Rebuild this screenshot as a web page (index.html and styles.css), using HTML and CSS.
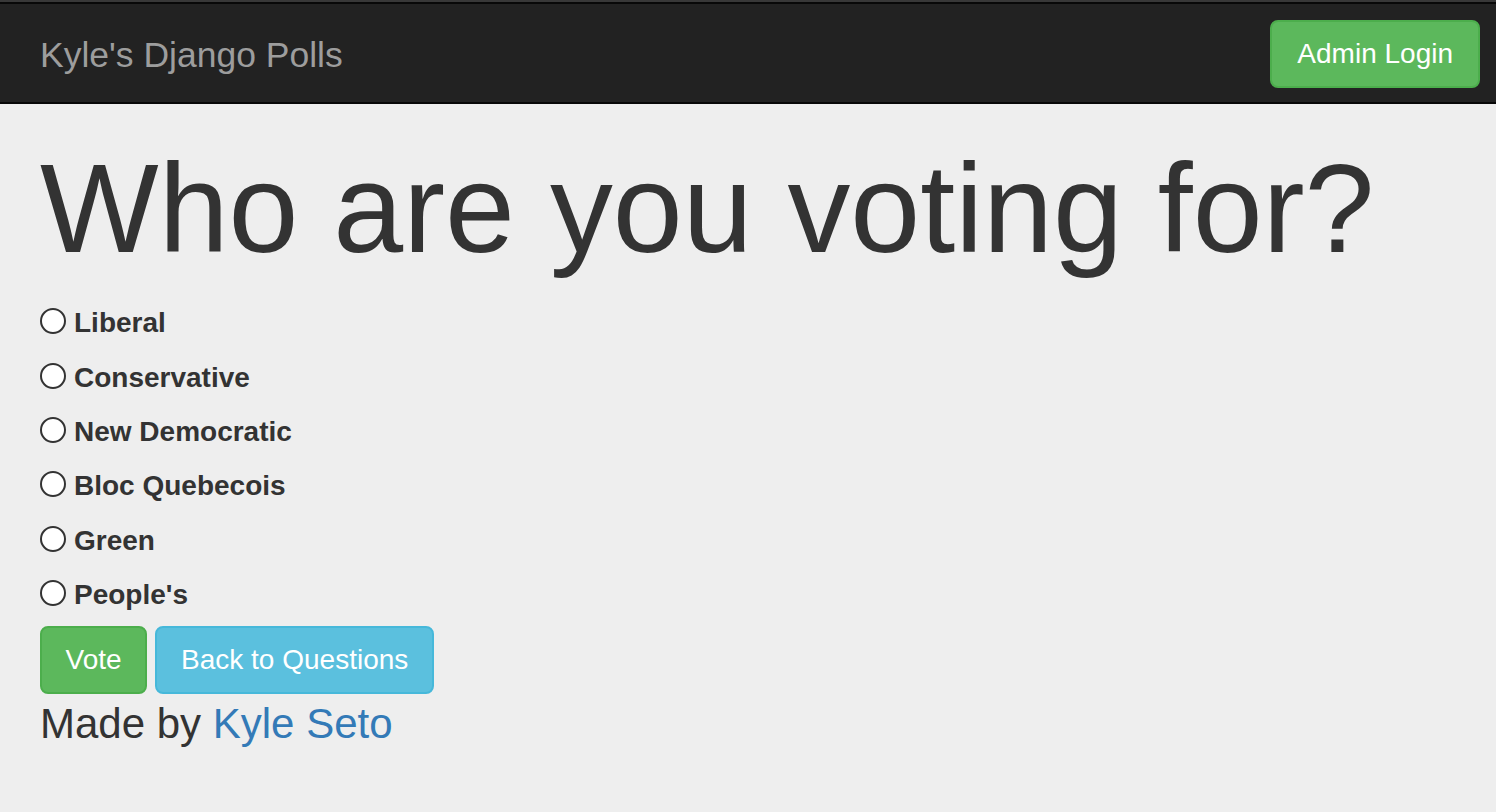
FILE: index.html
```html
<!DOCTYPE html>
<html lang="en">
<head>
<meta charset="utf-8">
<title>Kyle's Django Polls</title>
<link rel="stylesheet" href="styles.css">
</head>
<body>
<div class="page">
  <nav class="navbar">
    <a class="brand" href="#">Kyle's Django Polls</a>
    <a class="btn btn-success navbar-btn" href="#">Admin Login</a>
  </nav>
  <main class="jumbotron">
    <h1 class="title">Who are you voting for?</h1>
    <form class="poll">
      <label class="choice"><input type="radio" name="choice" class="radio"><span>Liberal</span></label>
      <label class="choice"><input type="radio" name="choice" class="radio"><span>Conservative</span></label>
      <label class="choice"><input type="radio" name="choice" class="radio"><span>New Democratic</span></label>
      <label class="choice"><input type="radio" name="choice" class="radio"><span>Bloc Quebecois</span></label>
      <label class="choice"><input type="radio" name="choice" class="radio"><span>Green</span></label>
      <label class="choice"><input type="radio" name="choice" class="radio"><span>People's</span></label>
      <div class="actions">
        <button type="button" class="btn btn-success btn-vote">Vote</button>
        <a class="btn btn-info" href="#">Back to Questions</a>
      </div>
    </form>
    <p class="credit">Made by <a href="#" class="link">Kyle Seto</a></p>
  </main>
</div>
</body>
</html>
```
FILE: styles.css
```css
* { box-sizing: border-box; }
html, body {
  margin: 0;
  padding: 0;
  background: #eeeeee;
  font-family: "Liberation Sans", Arial, Helvetica, sans-serif;
  color: #333333;
}
.page {
  border-top: 2px solid #383838;
  min-height: 812px;
}
.navbar {
  display: flex;
  justify-content: space-between;
  align-items: flex-start;
  background: #222222;
  border-top: 2px solid #080808;
  border-bottom: 2px solid #080808;
  height: 102px;
  padding: 0 16px 0 40px;
}
.brand {
  color: #9d9d9d;
  text-decoration: none;
  font-size: 35.5px;
  line-height: 40px;
  margin-top: 31px;
}
.btn {
  display: inline-block;
  font-family: "Liberation Sans", Arial, Helvetica, sans-serif;
  font-size: 28px;
  line-height: 40px;
  padding: 12px 24px;
  border: 2px solid transparent;
  border-radius: 8px;
  color: #ffffff;
  text-decoration: none;
  cursor: pointer;
}
.btn-success {
  background: #5cb85c;
  border-color: #4cae4c;
}
.btn-info {
  background: #5bc0de;
  border-color: #46b8da;
}
.navbar-btn {
  margin-top: 16px;
  padding: 12px 25px;
}
.jumbotron {
  padding: 0 40px;
}
.title {
  margin: 36px 0 0;
  font-size: 125.7px;
  line-height: 1.1;
  font-weight: 500;
  color: #333333;
}
.poll {
  display: flex;
  flex-direction: column;
  margin-top: 25px;
}
.choice {
  display: flex;
  align-items: flex-start;
  gap: 8px;
  height: 40px;
  margin-bottom: 14.4px;
  font-size: 28px;
  line-height: 40px;
  font-weight: bold;
  color: #333333;
}
.radio {
  appearance: none;
  -webkit-appearance: none;
  width: 26px;
  height: 26px;
  margin: 5px 0 0;
  border: 2px solid #333333;
  border-radius: 50%;
  background: #ffffff;
  flex: none;
}
.actions {
  display: flex;
  gap: 8px;
  margin-top: -4px;
}
.btn-vote {
  padding: 12px 23.5px;
}
.credit {
  margin: 0;
  font-size: 42px;
  line-height: 60px;
}
.link {
  color: #337ab7;
  text-decoration: none;
}
```
